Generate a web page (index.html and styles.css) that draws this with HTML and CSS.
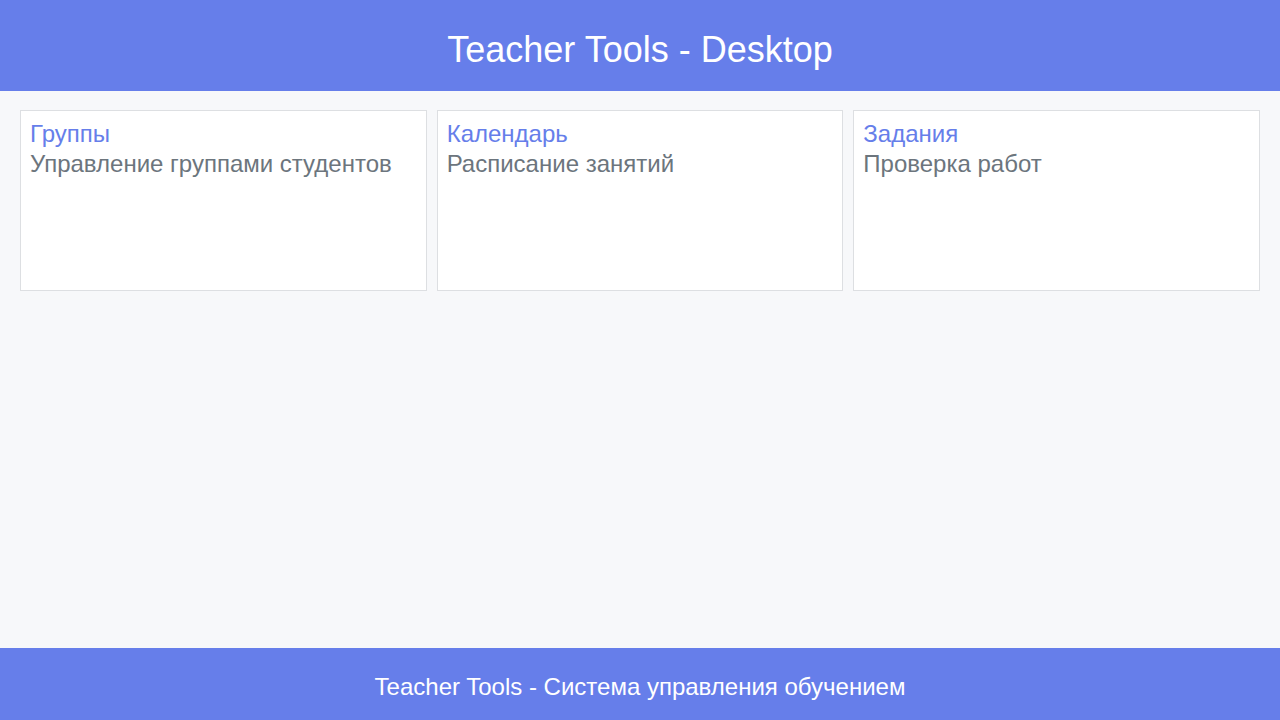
FILE: index.html
```html
<!DOCTYPE html>
<html lang="ru">
<head>
<meta charset="utf-8">
<title>Teacher Tools - Desktop</title>
<link rel="stylesheet" href="styles.css">
</head>
<body>
<div class="app">
  <header class="top-bar">
    <h1 class="top-title">Teacher Tools - Desktop</h1>
  </header>
  <main class="content">
    <section class="cards">
      <div class="card">
        <h2 class="card-title">Группы</h2>
        <p class="card-text">Управление группами студентов</p>
      </div>
      <div class="card">
        <h2 class="card-title">Календарь</h2>
        <p class="card-text">Расписание занятий</p>
      </div>
      <div class="card">
        <h2 class="card-title">Задания</h2>
        <p class="card-text">Проверка работ</p>
      </div>
    </section>
  </main>
  <footer class="bottom-bar">
    <p class="bottom-text">Teacher Tools - Система управления обучением</p>
  </footer>
</div>
</body>
</html>
```
FILE: styles.css
```css
* { box-sizing: border-box; }
html, body {
  margin: 0;
  padding: 0;
  height: 100%;
}
body {
  font-family: "Liberation Sans", Arial, sans-serif;
  background: #f7f8fa;
}
.app {
  display: flex;
  flex-direction: column;
  height: 720px;
}
.top-bar {
  background: #667eea;
  color: #ffffff;
  text-align: center;
  padding: 29px 0 21px;
}
.top-title {
  margin: 0;
  font-size: 36px;
  font-weight: 400;
  line-height: 41px;
}
.content {
  flex: 1;
  padding: 19px 20px;
  background: #f7f8fa;
}
.cards {
  display: grid;
  grid-template-columns: repeat(3, 1fr);
  gap: 10px;
}
.card {
  background: #ffffff;
  border: 1px solid #dddfe2;
  min-height: 181px;
  padding: 8px 9px;
}
.card-title {
  margin: 0;
  font-size: 24px;
  font-weight: 400;
  line-height: 30px;
  color: #667eea;
}
.card-text {
  margin: 0;
  font-size: 24px;
  line-height: 30px;
  color: #6c757d;
}
.bottom-bar {
  background: #667eea;
  color: #ffffff;
  text-align: center;
  padding: 25px 0 19px;
}
.bottom-text {
  margin: 0;
  font-size: 24px;
  line-height: 28px;
}
```
